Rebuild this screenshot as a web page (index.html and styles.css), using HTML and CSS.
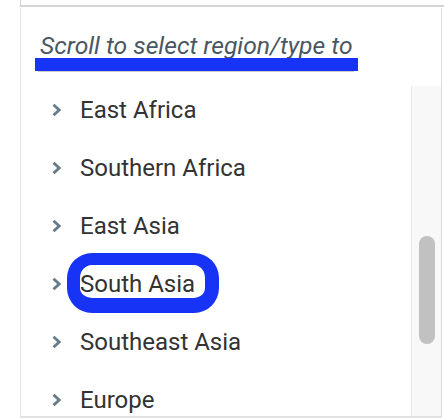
FILE: index.html
```html
<!DOCTYPE html>
<html>
<head>
<meta charset="utf-8">
<link rel="stylesheet" href="styles.css">
</head>
<body>
<div class="field"></div>
<div class="panel">
  <div class="search">
    <div class="input">Scroll to select region/type to</div>
  </div>
  <div class="listwrap">
    <div class="list">
      <div class="items">
        <div class="item"><svg class="chev" viewBox="0 0 9 14" width="9" height="14"><path d="M1.5 1.8 L7.2 7 L1.5 12.2"/></svg><span>East Africa</span></div>
        <div class="item"><svg class="chev" viewBox="0 0 9 14" width="9" height="14"><path d="M1.5 1.8 L7.2 7 L1.5 12.2"/></svg><span>Southern Africa</span></div>
        <div class="item"><svg class="chev" viewBox="0 0 9 14" width="9" height="14"><path d="M1.5 1.8 L7.2 7 L1.5 12.2"/></svg><span>East Asia</span></div>
        <div class="item"><svg class="chev" viewBox="0 0 9 14" width="9" height="14"><path d="M1.5 1.8 L7.2 7 L1.5 12.2"/></svg><span>South Asia</span></div>
        <div class="item"><svg class="chev" viewBox="0 0 9 14" width="9" height="14"><path d="M1.5 1.8 L7.2 7 L1.5 12.2"/></svg><span>Southeast Asia</span></div>
        <div class="item"><svg class="chev" viewBox="0 0 9 14" width="9" height="14"><path d="M1.5 1.8 L7.2 7 L1.5 12.2"/></svg><span>Europe</span></div>
      </div>
    </div>
    <div class="track"><div class="thumb"></div></div>
  </div>
</div>
<div class="mark-bar"></div>
<div class="mark-ring"></div>
</body>
</html>
```
FILE: styles.css
```css
html, body {
  margin: 0;
  padding: 0;
}
body {
  width: 444px;
  height: 418px;
  overflow: hidden;
  position: relative;
  background: #fff;
  font-family: Roboto, "Liberation Sans", sans-serif;
}
.field {
  margin-left: 20px;
  height: 5px;
  border-left: 1px solid #d0d0d0;
  border-bottom: 2px solid #d3d5d7;
}
.panel {
  margin-left: 20px;
  margin-top: 1px;
  width: 420px;
  border-left: 1px solid #e2e2e2;
  border-right: 1px solid #dcdcdc;
  border-bottom: 2px solid #e2e2e2;
}
.search {
  height: 78px;
  box-sizing: border-box;
  padding: 24px 0 0 17px;
}
.input {
  width: 314px;
  padding-left: 2px;
  padding-bottom: 11px;
  font-size: 24.7px;
  line-height: 28px;
  font-style: italic;
  color: #4a5763;
  border-bottom: 1px solid #c9ccce;
  white-space: nowrap;
}
.listwrap {
  display: flex;
  height: 330px;
}
.list {
  flex: 1;
  overflow: hidden;
}
.items {
  margin-top: -5px;
}
.item {
  height: 58px;
  display: flex;
  align-items: center;
  padding-left: 31px;
  font-size: 24px;
  color: #333;
}
.chev {
  margin-right: 19px;
  flex: none;
}
.chev path {
  fill: none;
  stroke: #667a8a;
  stroke-width: 2.9;
}
.track {
  width: 29px;
  border-left: 1px solid #e6e6e6;
  background: #f8f8f8;
}
.thumb {
  margin: 150px 0 0 7px;
  width: 16px;
  height: 108px;
  border-radius: 8px;
  background: #c1c1c1;
}
.mark-bar {
  position: absolute;
  left: 35px;
  top: 58px;
  width: 323px;
  height: 13px;
  background: #1733f5;
}
.mark-ring {
  position: absolute;
  left: 67px;
  top: 253px;
  width: 152px;
  height: 60px;
  box-sizing: border-box;
  border-style: solid;
  border-color: #1733f5;
  border-width: 12px 14px 15px 13px;
  border-radius: 25px;
}
```
